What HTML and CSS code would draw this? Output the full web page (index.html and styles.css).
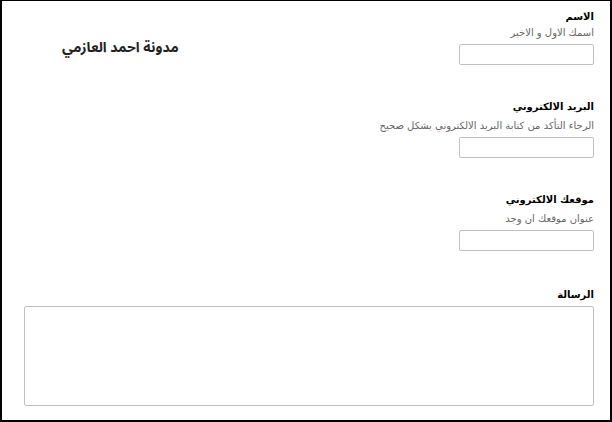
FILE: index.html
```html
<!DOCTYPE html>
<html lang="ar">
<head>
<meta charset="utf-8">
<title>مدونة احمد العازمي</title>
<link rel="stylesheet" href="styles.css">
</head>
<body>
<div class="frame">
  <div class="top">
    <h1 class="brand">مدونة احمد العازمي</h1>
    <div class="fields" dir="rtl">
      <div class="field field-first">
        <div class="label">الاسم</div>
        <div class="hint">اسمك الاول و الاخير</div>
        <input class="input" type="text">
      </div>
      <div class="field">
        <div class="label">البريد الالكتروني</div>
        <div class="hint">الرجاء التأكد من كتابة البريد الالكتروني بشكل صحيح</div>
        <input class="input" type="text">
      </div>
      <div class="field">
        <div class="label">موقعك الالكتروني</div>
        <div class="hint">عنوان موقعك ان وجد</div>
        <input class="input" type="text">
      </div>
    </div>
  </div>
  <div class="message" dir="rtl">
    <div class="label">الرسالة</div>
    <textarea class="area"></textarea>
  </div>
</div>
</body>
</html>
```
FILE: styles.css
```css
html, body {
  margin: 0;
  padding: 0;
  background: #fff;
}
.frame {
  box-sizing: border-box;
  width: 612px;
  height: 422px;
  border: 2px solid #000;
  border-top-width: 1px;
  padding: 8px 16px 0 23px;
  font-family: "DejaVu Sans", sans-serif;
  color: #000;
}
.top {
  display: flex;
  justify-content: space-between;
  align-items: flex-start;
}
.brand {
  margin: 29px 0 0 37px;
  font-family: "Noto Sans Arabic", "DejaVu Sans", sans-serif;
  font-size: 14px;
  font-weight: bold;
  color: #222;
  line-height: 20px;
}
.fields {
  display: flex;
  flex-direction: column;
  width: 240px;
}
.field {
  display: flex;
  flex-direction: column;
  align-items: flex-start;
  margin-bottom: 34px;
}
.label {
  font-size: 10px;
  font-weight: bold;
  line-height: 15px;
  color: #000;
}
.hint {
  font-size: 10px;
  line-height: 15px;
  color: #666;
  margin-top: 4px;
}
.field-first .hint {
  margin-top: 1px;
}
.input {
  box-sizing: border-box;
  width: 135px;
  height: 21px;
  margin: 4px 0 0;
  border: 1px solid #c2c2c2;
  border-radius: 2px;
  padding: 0;
  background: #fff;
}
.message {
  margin-top: 2px;
  display: flex;
  flex-direction: column;
  align-items: flex-start;
}
.area {
  box-sizing: border-box;
  width: 570px;
  height: 100px;
  margin: 4px 0 0;
  border: 1px solid #c2c2c2;
  border-radius: 2px;
  padding: 0;
  resize: none;
  background: #fff;
}
```
